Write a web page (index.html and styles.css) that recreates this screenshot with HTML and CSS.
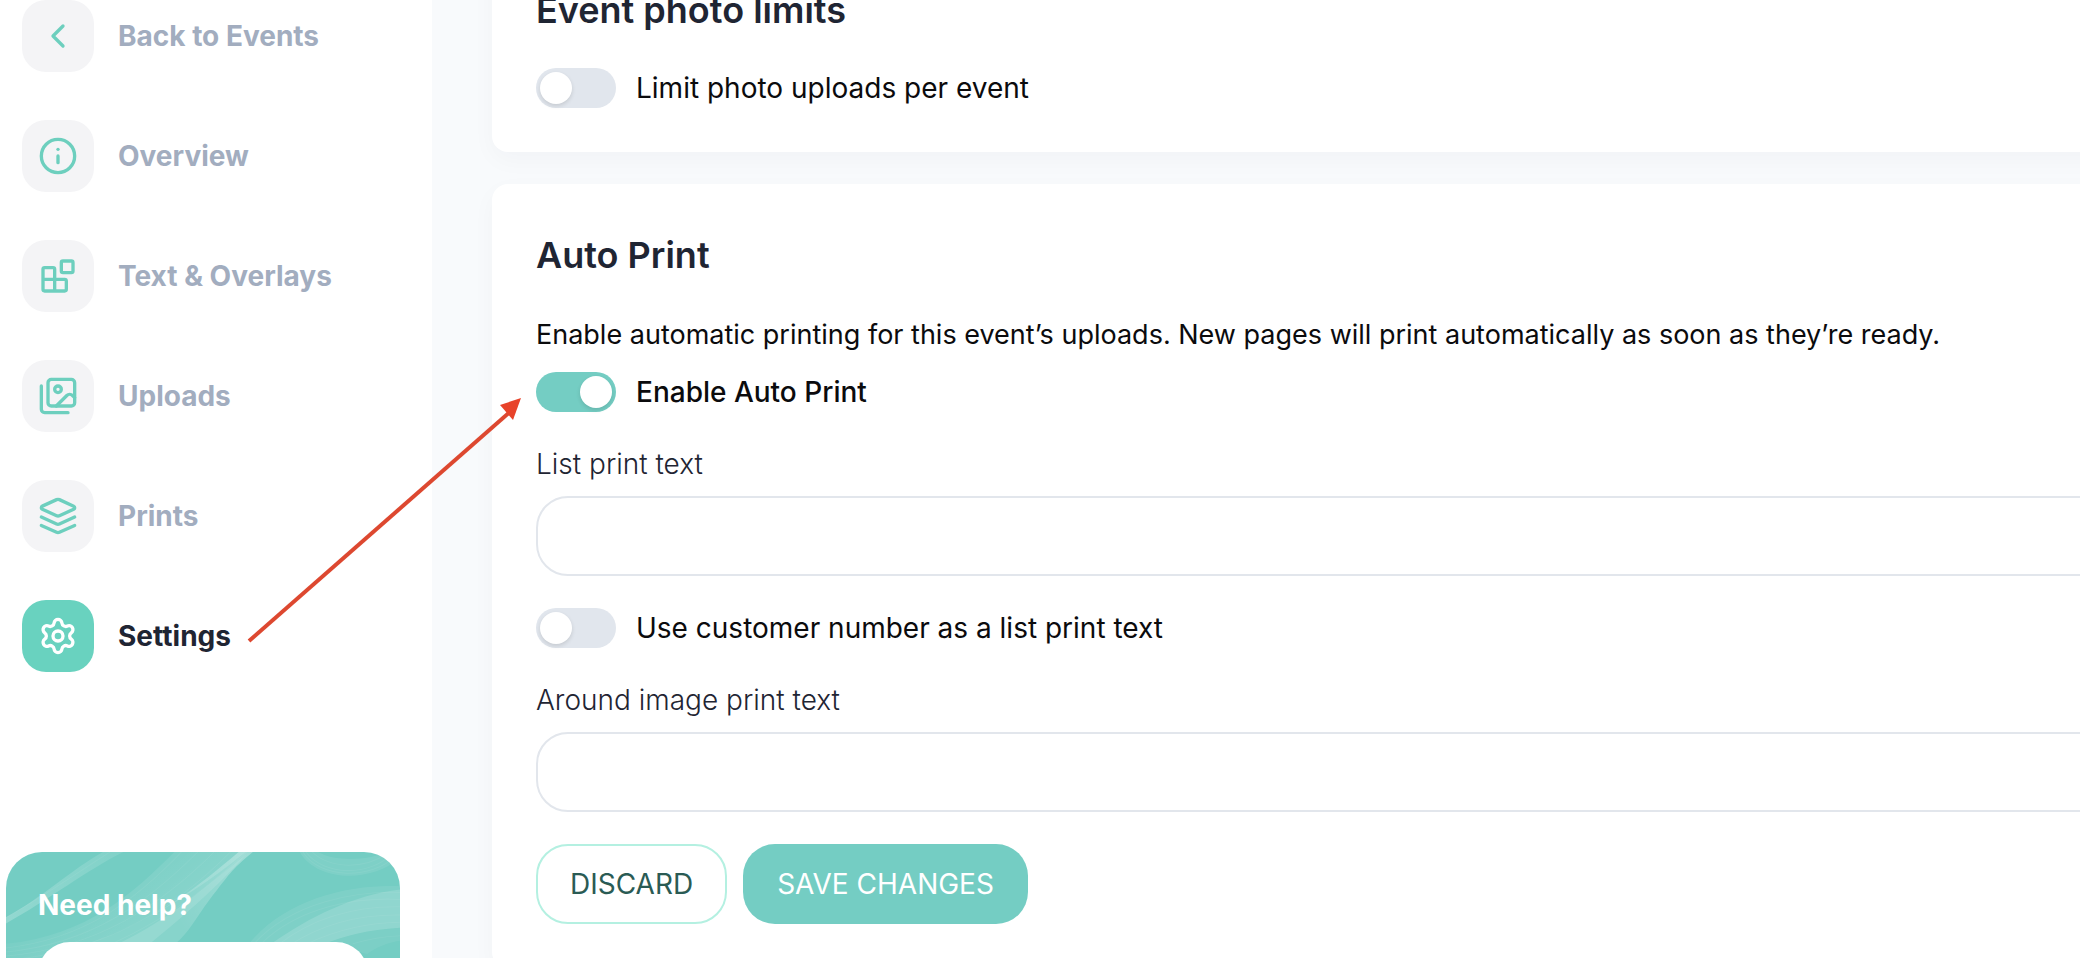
FILE: index.html
```html
<!DOCTYPE html>
<html lang="en">
<head>
<meta charset="utf-8">
<meta name="viewport" content="width=device-width, initial-scale=1">
<title>Event settings</title>
<link rel="stylesheet" href="styles.css">
</head>
<body>
<div class="app">
  <aside class="sidebar">
    <nav class="nav" aria-label="Event">
      <a class="nav-link" href="#events">
        <span class="nav-icon"><svg class="icon" viewBox="0 0 24 24" aria-hidden="true"><path d="m15 18-6-6 6-6"/></svg></span>
        Back to Events
      </a>
      <a class="nav-link" href="#overview">
        <span class="nav-icon"><svg class="icon" viewBox="0 0 24 24" aria-hidden="true"><circle cx="12" cy="12" r="10"/><path d="M12 16v-4"/><path d="M12 8h.01"/></svg></span>
        Overview
      </a>
      <a class="nav-link" href="#overlays">
        <span class="nav-icon"><svg class="icon" viewBox="0 0 24 24" aria-hidden="true"><rect width="7" height="7" x="14" y="3" rx="1"/><path d="M10 21V8a1 1 0 0 0-1-1H4a1 1 0 0 0-1 1v12a1 1 0 0 0 1 1h12a1 1 0 0 0 1-1v-5a1 1 0 0 0-1-1H3"/></svg></span>
        Text &amp; Overlays
      </a>
      <a class="nav-link" href="#uploads">
        <span class="nav-icon"><svg class="icon" viewBox="0 0 24 24" aria-hidden="true"><path d="M18 22H4a2 2 0 0 1-2-2V6"/><path d="m22 13-1.296-1.296a2.41 2.41 0 0 0-3.408 0L11 18"/><circle cx="12" cy="8" r="2"/><rect width="16" height="16" x="6" y="2" rx="2"/></svg></span>
        Uploads
      </a>
      <a class="nav-link" href="#prints">
        <span class="nav-icon"><svg class="icon" viewBox="0 0 24 24" aria-hidden="true"><path d="M12.83 2.18a2 2 0 0 0-1.66 0L2.6 6.08a1 1 0 0 0 0 1.83l8.58 3.91a2 2 0 0 0 1.66 0l8.58-3.9a1 1 0 0 0 0-1.83Z"/><path d="m22 17.65-9.17 4.16a2 2 0 0 1-1.66 0L2 17.65"/><path d="m22 12.65-9.17 4.16a2 2 0 0 1-1.66 0L2 12.65"/></svg></span>
        Prints
      </a>
      <a class="nav-link nav-link-active" href="#settings" aria-current="page">
        <span class="nav-icon"><svg class="icon" viewBox="0 0 24 24" aria-hidden="true"><path d="M9.671 4.136a2.34 2.34 0 0 1 4.659 0 2.34 2.34 0 0 0 3.319 1.915 2.34 2.34 0 0 1 2.33 4.033 2.34 2.34 0 0 0 0 3.831 2.34 2.34 0 0 1-2.33 4.033 2.34 2.34 0 0 0-3.319 1.915 2.34 2.34 0 0 1-4.659 0 2.34 2.34 0 0 0-3.32-1.915 2.34 2.34 0 0 1-2.33-4.033 2.34 2.34 0 0 0 0-3.831A2.34 2.34 0 0 1 6.35 6.051a2.34 2.34 0 0 0 3.319-1.915"/><circle cx="12" cy="12" r="3"/></svg></span>
        Settings
      </a>
    </nav>
    <section class="help">
      <svg class="help-waves" viewBox="0 0 394 198" preserveAspectRatio="xMinYMin slice" aria-hidden="true">
        <defs>
          <linearGradient id="ribbon" gradientUnits="userSpaceOnUse" x1="80" y1="90" x2="236" y2="0">
            <stop offset="0" stop-color="#fff" stop-opacity=".14"/>
            <stop offset=".5" stop-color="#fff" stop-opacity=".14"/>
            <stop offset="1" stop-color="#fff" stop-opacity=".3"/>
          </linearGradient>
          <linearGradient id="streak" gradientUnits="userSpaceOnUse" x1="0" y1="66" x2="108" y2="0">
            <stop offset="0" stop-color="#fff" stop-opacity=".22"/>
            <stop offset="1" stop-color="#fff" stop-opacity=".1"/>
          </linearGradient>
          <linearGradient id="veil" gradientUnits="userSpaceOnUse" x1="60" y1="10" x2="120" y2="90">
            <stop offset="0" stop-color="#fff" stop-opacity="0"/>
            <stop offset="1" stop-color="#fff" stop-opacity=".14"/>
          </linearGradient>
        </defs>
        <path fill="url(#streak)" d="M0 64C35 45 66 16 95 0h20C82 16 40 48 0 70Z"/>
        <path fill="url(#veil)" d="M0 90C80 82 125 40 165 0h70C205 24 150 66 80 90L40 130H0Z"/>
        <path fill="url(#ribbon)" d="M80 90C150 66 190 32 228 0h14C220 18 219 22 200 46 185 66 180 78 166 90Z"/>
        <path fill="#fff" fill-opacity=".12" d="M110 90C160 66 196 34 236 2 214 26 190 50 141 90Z"/>
        <path fill="#fff" fill-opacity=".08" d="M288 0C305 30 360 30 385 6L372 0C355 9 320 9 306 0Z"/>
        <path fill="#fff" fill-opacity=".08" d="M238 90C275 45 340 30 394 34v40c-35 1-60 8-82 16Z"/>
        <path fill="#fff" fill-opacity=".14" d="M260 90C300 62 345 40 394 36v38c-35 1-60 8-82 16Z"/>
        <path fill="#fff" fill-opacity=".06" d="M312 90C334 82 359 75 394 74v12c-15 1-30 6-40 14Z"/>
        <g fill="none" stroke="#fff" stroke-opacity=".06">
          <path d="M0 94C80 85 130 44 172 0M0 98C85 90 140 48 188 0M0 102C90 94 152 52 204 0M0 106C96 98 165 56 220 0M104 90C165 62 200 32 236 0M0 64C35 45 70 20 102 0"/>
          <path d="M294 0C312 24 356 24 378 2M300 0C318 17 352 17 374 1M291 0C308 27 358 27 382 4"/>
          <path d="M243 90C280 50 342 37 394 40M250 90C287 54 344 43 394 47M268 90C305 62 350 52 394 54M280 90C315 68 352 60 394 62M295 90C325 76 358 68 394 69M340 90C360 84 378 82 394 82"/>
        </g>
      </svg>
      <h2 class="help-title">Need help?</h2>
      <button class="help-button" type="button" aria-label="Get help"></button>
    </section>
  </aside>

  <main class="content">
    <section class="card">
      <h2 class="card-title">Event photo limits</h2>
      <div class="switch-row">
        <input class="switch" type="checkbox" role="switch" id="limit-uploads">
        <label for="limit-uploads">Limit photo uploads per event</label>
      </div>
    </section>

    <form class="card">
      <h2 class="card-title">Auto Print</h2>
      <p class="card-text">Enable automatic printing for this event’s uploads. New pages will print automatically as soon as they’re ready.</p>
      <div class="fields">
        <div class="switch-row switch-row-strong">
          <input class="switch" type="checkbox" role="switch" id="auto-print" checked>
          <label for="auto-print">Enable Auto Print</label>
        </div>
        <div class="field">
          <label class="field-label" for="list-text">List print text</label>
          <input class="field-input" type="text" id="list-text">
        </div>
        <div class="switch-row">
          <input class="switch" type="checkbox" role="switch" id="customer-number">
          <label for="customer-number">Use customer number as a list print text</label>
        </div>
        <div class="field">
          <label class="field-label" for="around-text">Around image print text</label>
          <input class="field-input" type="text" id="around-text">
        </div>
        <div class="actions">
          <button class="button button-outline" type="reset">DISCARD</button>
          <button class="button button-solid" type="submit">SAVE CHANGES</button>
        </div>
      </div>
    </form>
  </main>

  <svg class="pointer" width="280" height="250" viewBox="0 0 280 250" aria-hidden="true">
    <path d="M5 246 267 16" stroke="#dd4830" stroke-width="4" fill="none"/>
    <path d="M277 3 256 10 269 25Z" fill="#e8432a"/>
  </svg>
</div>
</body>
</html>
```
FILE: styles.css
```css
* {
  box-sizing: border-box;
}

body {
  margin: 0;
  font-family: Inter, "Liberation Sans", sans-serif;
  font-size: 28px;
  line-height: 40px;
  color: #0b0b0d;
  background: #f8fafc;
}

h2,
p {
  margin: 0;
}

.app {
  position: relative;
  display: flex;
  height: 100vh;
  overflow: hidden;
}

.sidebar {
  flex: 0 0 432px;
  display: flex;
  flex-direction: column;
  gap: 180px;
  background: #fff;
}

.nav {
  display: flex;
  flex-direction: column;
  gap: 48px;
  padding-left: 22px;
}

.nav-link {
  display: flex;
  align-items: center;
  gap: 24px;
  font-weight: 700;
  color: #a2adbf;
  text-decoration: none;
}

.nav-icon {
  display: grid;
  place-items: center;
  width: 72px;
  height: 72px;
  border-radius: 24px;
  background: #f4f4f6;
  color: #6dcfbe;
}

.icon {
  width: 40px;
  height: 40px;
  fill: none;
  stroke: currentColor;
  stroke-width: 2;
  stroke-linecap: round;
  stroke-linejoin: round;
}

.nav-link-active {
  color: #1f2533;
}

.nav-link-active .nav-icon {
  background: #69d2bf;
  color: #fff;
}

.help {
  position: relative;
  flex: none;
  display: flex;
  flex-direction: column;
  gap: 17px;
  margin: 0 32px 0 6px;
  padding: 33px 32px 32px;
  border-radius: 36px;
  overflow: hidden;
  background: #74cdc3;
}

.help-waves {
  position: absolute;
  inset: 0;
  width: 100%;
  height: 100%;
}

.help-title {
  position: relative;
  font-size: 28px;
  font-weight: 700;
  color: #fff;
}

.help-button {
  position: relative;
  height: 80px;
  border: 0;
  border-radius: 32px;
  background: #fff;
}

.content {
  flex: 1;
  display: flex;
  flex-direction: column;
  gap: 32px;
  min-width: 0;
  margin: -61px -120px 0 60px;
}

.card {
  flex: none;
  padding: 49px 44px 44px;
  border-radius: 16px;
  background: #fff;
  box-shadow: 0 8px 24px rgba(20, 30, 50, 0.03);
}

.card-title {
  margin-bottom: 36px;
  font-size: 36px;
  font-weight: 600;
  line-height: 44px;
  color: #1f2533;
}

.card-text {
  margin-bottom: 15px;
  font-size: 27px;
  line-height: 44px;
}

.fields {
  display: flex;
  flex-direction: column;
  gap: 32px;
}

.switch-row {
  display: flex;
  align-items: center;
  gap: 20px;
}

.switch-row-strong {
  font-weight: 500;
}

.switch {
  appearance: none;
  flex: none;
  width: 80px;
  height: 40px;
  margin: 0;
  padding: 4px;
  border-radius: 20px;
  background: #e1e6ed;
}

.switch::before {
  content: "";
  display: block;
  width: 32px;
  height: 32px;
  border-radius: 50%;
  background: #fff;
  box-shadow: 0 2px 4px rgba(0, 0, 0, 0.12);
}

.switch:checked {
  background: #74cdc3;
}

.switch:checked::before {
  margin-left: auto;
}

.field {
  display: flex;
  flex-direction: column;
  gap: 12px;
}

.field-label {
  font-weight: 300;
  color: #1f2533;
}

.field-input {
  width: 100%;
  height: 80px;
  padding: 0 32px;
  border: 2px solid #e2e6ec;
  border-radius: 32px;
  font: inherit;
  background: #fff;
}

.actions {
  display: flex;
  gap: 16px;
}

.button {
  height: 80px;
  padding: 0 32px;
  border: 2px solid transparent;
  border-radius: 32px;
  font: inherit;
}

.button-outline {
  border-color: #b4f0e1;
  background: #fff;
  color: #2a5b54;
}

.button-solid {
  background: #74cdc3;
  color: #fff;
}

.pointer {
  position: absolute;
  left: 244px;
  top: 395px;
  pointer-events: none;
}
```
